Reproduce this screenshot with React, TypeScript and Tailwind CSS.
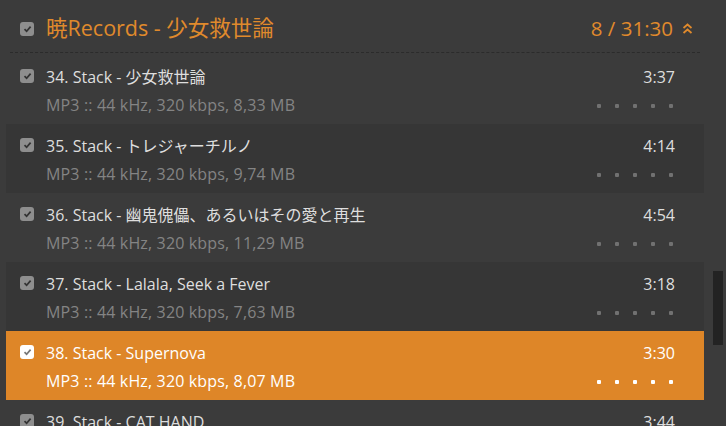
import React from "react";

type Track = { title: string; meta: string; dur: string; selected?: boolean; dark?: boolean };

const tracks: Track[] = [
  { title: "34. Stack - 少女救世論", meta: "MP3 :: 44 kHz, 320 kbps, 8,33 MB", dur: "3:37" },
  { title: "35. Stack - トレジャーチルノ", meta: "MP3 :: 44 kHz, 320 kbps, 9,74 MB", dur: "4:14", dark: true },
  { title: "36. Stack - 幽鬼傀儡、あるいはその愛と再生", meta: "MP3 :: 44 kHz, 320 kbps, 11,29 MB", dur: "4:54" },
  { title: "37. Stack - Lalala, Seek a Fever", meta: "MP3 :: 44 kHz, 320 kbps, 7,63 MB", dur: "3:18", dark: true },
  { title: "38. Stack - Supernova", meta: "MP3 :: 44 kHz, 320 kbps, 8,07 MB", dur: "3:30", selected: true },
  { title: "39. Stack - CAT HAND", meta: "MP3 :: 44 kHz, 320 kbps, 8,12 MB", dur: "3:44" },
];

const font = { fontFamily: '"Open Sans", "Noto Sans CJK JP", sans-serif' };

function Check({ light }: { light?: boolean }) {
  return (
    <div
      className={`w-[14px] h-[14px] rounded-[3px] flex items-center justify-center shrink-0 ${
        light ? "bg-white" : "bg-[#8e8e8e]"
      }`}
    >
      <svg width="9" height="8" viewBox="0 0 9 8">
        <path d="M1.5 4.2 L3.6 6.2 L7.6 1.6" fill="none" stroke={light ? "#777" : "#333"} strokeWidth="1.7" />
      </svg>
    </div>
  );
}

function Dots({ light }: { light?: boolean }) {
  return (
    <div className="flex gap-[14px]">
      {[0, 1, 2, 3, 4].map((i) => (
        <div key={i} className={`w-[4px] h-[4px] rounded-[1px] ${light ? "bg-white" : "bg-[#717171]"}`} />
      ))}
    </div>
  );
}

function Row({ t }: { t: Track }) {
  const bg = t.selected ? "bg-[#de8628]" : t.dark ? "bg-[#363636]" : "bg-[#3b3b3b]";
  return (
    <div className={`h-[69px] shrink-0 ${bg} flex pl-[14px] pr-[29px] pt-[11px]`}>
      <div className="pt-[3px]">
        <Check light={t.selected} />
      </div>
      <div className="flex-1 pl-[12px]">
        <div className="flex justify-between h-[21px] items-center">
          <span className={`text-[16px] whitespace-nowrap ${t.selected ? "text-white" : "text-[#dedede]"}`}>{t.title}</span>
          <span className={`text-[16px] ${t.selected ? "text-white" : "text-[#dedede]"}`}>{t.dur}</span>
        </div>
        <div className="flex justify-between h-[21px] items-center mt-[7px]">
          <span className={`text-[16px] tracking-[0.15px] ${t.selected ? "text-white" : "text-[#848484]"}`}>{t.meta}</span>
          <div className="pr-[2px] pt-[2px]">
            <Dots light={t.selected} />
          </div>
        </div>
      </div>
    </div>
  );
}

export default function App() {
  return (
    <div className="w-[726px] h-[426px] bg-[#3b3b3b] overflow-hidden flex" style={font}>
      <div className="w-[704px] pl-[6px] flex flex-col">
        <div className="mx-[4px] h-[53px] border-b border-dashed border-[#2b2b2b] flex items-center pl-[10px] pr-[7px] shrink-0 pt-[5px]">
          <Check />
          <span className="ml-[12px] text-[21.5px] text-[#e08a2c] whitespace-nowrap">暁Records - 少女救世論</span>
          <span className="ml-auto text-[20.5px] text-[#e08a2c]">8 / 31:30</span>
          <svg className="ml-[9px]" width="11" height="12" viewBox="0 0 11 12">
            <path d="M1.5 5 L5.5 1.5 L9.5 5 M1.5 10 L5.5 6.5 L9.5 10" fill="none" stroke="#e08a2c" strokeWidth="1.8" />
          </svg>
        </div>
        <div className="h-[2px] shrink-0" />
        {tracks.map((t, i) => (
          <Row key={i} t={t} />
        ))}
      </div>
      <div className="flex-1 pl-[9px] pt-[271px]">
        <div className="w-[10px] h-[74px] bg-[#232323]" />
      </div>
    </div>
  );
}
